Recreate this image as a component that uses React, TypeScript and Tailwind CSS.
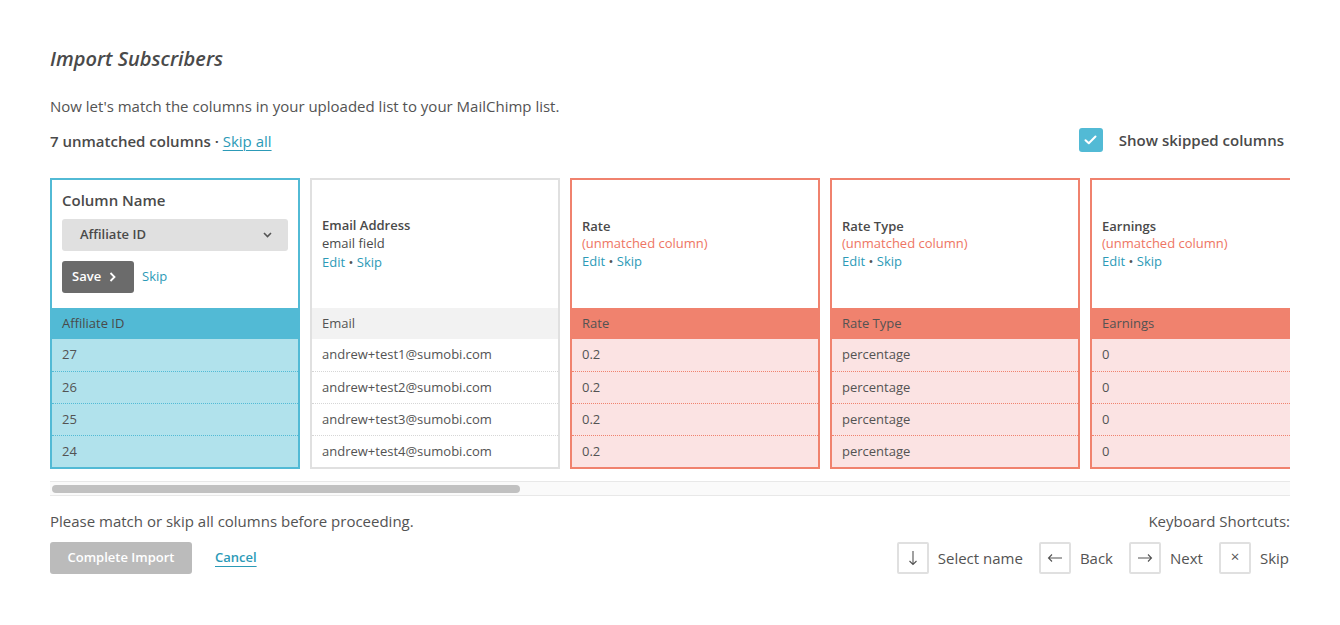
import React from "react";

const font = { fontFamily: '"Open Sans", "Noto Sans", sans-serif' };

type Col = {
  title: string;
  sub: string;
  kind: "gray" | "red";
  head: string;
  rows: string[];
};

const cols: Col[] = [
  { title: "Email Address", sub: "email field", kind: "gray", head: "Email", rows: ["andrew+test1@sumobi.com", "andrew+test2@sumobi.com", "andrew+test3@sumobi.com", "andrew+test4@sumobi.com"] },
  { title: "Rate", sub: "(unmatched column)", kind: "red", head: "Rate", rows: ["0.2", "0.2", "0.2", "0.2"] },
  { title: "Rate Type", sub: "(unmatched column)", kind: "red", head: "Rate Type", rows: ["percentage", "percentage", "percentage", "percentage"] },
  { title: "Earnings", sub: "(unmatched column)", kind: "red", head: "Earnings", rows: ["0", "0", "0", "0"] },
];

function Card({ c }: { c: Col }) {
  const red = c.kind === "red";
  return (
    <div className={`w-[250px] shrink-0 border-2 flex flex-col ${red ? "border-[#f0826e]" : "border-[#e0e0e0]"}`}>
      <div className="h-[128px] bg-white flex flex-col justify-center px-[10px]">
        <div className="text-[13px] font-semibold text-[#4a4a4a] leading-[18px]">{c.title}</div>
        {red ? (
          <div className="text-[13px] text-[#ee7563] leading-[17px]">{c.sub}</div>
        ) : (
          <div className="text-[13px] text-[#4a4a4a] leading-[19px]">{c.sub}</div>
        )}
        <div className="text-[13px] leading-[19px] text-[#535353]">
          <span className="text-[#2c9ab7]">Edit</span> • <span className="text-[#2c9ab7]">Skip</span>
        </div>
      </div>
      <div className={`h-[31px] flex items-center px-[10px] text-[13px] text-[#535353] ${red ? "bg-[#f0826e]" : "bg-[#f2f2f2]"}`}>
        {c.head}
      </div>
      {c.rows.map((r, i) => (
        <div
          key={i}
          className={`h-[32px] flex items-center px-[10px] text-[13px] text-[#535353] ${red ? "bg-[#fbe3e3]" : "bg-white"} ${i > 0 ? (red ? "border-t border-dotted border-[#f0826e]" : "border-t border-dotted border-[#d6d6d6]") : ""}`}
        >
          {r}
        </div>
      ))}
    </div>
  );
}

function Arrow({ dir }: { dir: "down" | "left" | "right" | "x" }) {
  if (dir === "x") {
    return <span className="text-[15px] leading-none text-[#535353] -mt-[3px]">×</span>;
  }
  const rot = dir === "down" ? 90 : dir === "left" ? 180 : 0;
  return (
    <svg width="16" height="16" viewBox="0 0 16 16" fill="none" style={{ transform: `rotate(${rot}deg)` }}>
      <path d="M1 8 H14.5 M11 4.5 L14.5 8 L11 11.5" stroke="#535353" strokeWidth="1.1" />
    </svg>
  );
}

function Key({ k, label }: { k: "down" | "left" | "right" | "x"; label: string }) {
  return (
    <div className="flex items-center gap-[9px]">
      <div className="w-[32px] h-[32px] border-2 border-[#e0e0e0] rounded-[2px] flex items-center justify-center">
        <Arrow dir={k} />
      </div>
      <span className="text-[15px] text-[#535353]">{label}</span>
    </div>
  );
}

export default function App() {
  return (
    <div className="bg-white w-[1340px] h-[625px] overflow-hidden" style={font}>
      <div className="pl-[50px] pr-[50px] pt-[44px]">
        <h1 className="text-[20px] italic font-semibold text-[#4a4a4a] leading-[30px]">Import Subscribers</h1>
        <p className="mt-[21px] text-[15px] text-[#535353] leading-[22px]">
          Now let's match the columns in your uploaded list to your MailChimp list.
        </p>
        <div className="mt-[10px] flex items-center justify-between h-[28px]">
          <div className="text-[15px] font-semibold text-[#4a4a4a]">
            7 unmatched columns · <span className="font-normal text-[#2c9ab7] underline underline-offset-[3px] decoration-1">Skip all</span>
          </div>
          <div className="flex items-center gap-[16px] mr-[6px] -mt-[2px]">
            <div className="w-[24px] h-[24px] rounded-[3px] bg-[#52bad5] flex items-center justify-center">
              <svg width="13" height="10" viewBox="0 0 13 10" fill="none">
                <path d="M1.5 5.2 L4.8 8.3 L11.5 1.5" stroke="white" strokeWidth="2" strokeLinecap="round" strokeLinejoin="round" />
              </svg>
            </div>
            <span className="text-[15px] font-semibold text-[#4a4a4a]">Show skipped columns</span>
          </div>
        </div>

        <div className="mt-[23px] w-[1240px] overflow-hidden">
          <div className="flex gap-[10px]">
            <div className="w-[250px] shrink-0 border-2 border-[#52bad5] flex flex-col">
              <div className="h-[128px] bg-white px-[10px] pt-[8px]">
                <div className="text-[15px] font-semibold text-[#4a4a4a] leading-[24px]">Column Name</div>
                <div className="mt-[7px] h-[32px] rounded-[3px] bg-[#e0e0e0] flex items-center justify-between pl-[18px] pr-[16px]">
                  <span className="text-[13px] font-semibold text-[#4a4a4a]">Affiliate ID</span>
                  <svg width="9" height="6" viewBox="0 0 9 6" fill="none">
                    <path d="M1 1 L4.5 4.5 L8 1" stroke="#555" strokeWidth="1.6" />
                  </svg>
                </div>
                <div className="mt-[10px] flex items-center gap-[8px]">
                  <div className="h-[32px] w-[72px] rounded-[3px] bg-[#6b6b6b] flex items-center pl-[10px] gap-[8px]">
                    <span className="text-[13px] font-semibold text-white">Save</span>
                    <svg width="7" height="10" viewBox="0 0 7 10" fill="none">
                      <path d="M1.5 1 L5.5 5 L1.5 9" stroke="white" strokeWidth="1.8" />
                    </svg>
                  </div>
                  <span className="text-[13px] text-[#2c9ab7]">Skip</span>
                </div>
              </div>
              <div className="h-[31px] flex items-center px-[10px] text-[13px] text-[#4a4a4a] bg-[#52bad5]">Affiliate ID</div>
              {["27", "26", "25", "24"].map((r, i) => (
                <div
                  key={r}
                  className={`h-[32px] flex items-center px-[10px] text-[13px] text-[#535353] bg-[#b1e2ec] ${i > 0 ? "border-t border-dotted border-[#52bad5]" : ""}`}
                >
                  {r}
                </div>
              ))}
            </div>
            {cols.map((c) => (
              <Card key={c.title} c={c} />
            ))}
          </div>
        </div>

        <div className="mt-[12px] w-[1240px] h-[15px] bg-[#fafafa] border-y border-[#e8e8e8] flex items-center px-[2px]">
          <div className="w-[468px] h-[8px] rounded-full bg-[#c1c1c1]" />
        </div>

        <div className="mt-[14px] flex justify-between text-[15px] text-[#535353] leading-[22px]">
          <span>Please match or skip all columns before proceeding.</span>
          <span>Keyboard Shortcuts:</span>
        </div>

        <div className="mt-[10px] flex items-center justify-between">
          <div className="flex items-center gap-[23px]">
            <div className="h-[32px] w-[142px] rounded-[3px] bg-[#bbbbbb] flex items-center justify-center text-[13px] font-semibold text-white">
              Complete Import
            </div>
            <span className="text-[13px] font-semibold text-[#2c9ab7] underline underline-offset-[4px] decoration-1">Cancel</span>
          </div>
          <div className="flex items-center gap-[16px] mr-[1px]">
            <Key k="down" label="Select name" />
            <Key k="left" label="Back" />
            <Key k="right" label="Next" />
            <Key k="x" label="Skip" />
          </div>
        </div>
      </div>
    </div>
  );
}
